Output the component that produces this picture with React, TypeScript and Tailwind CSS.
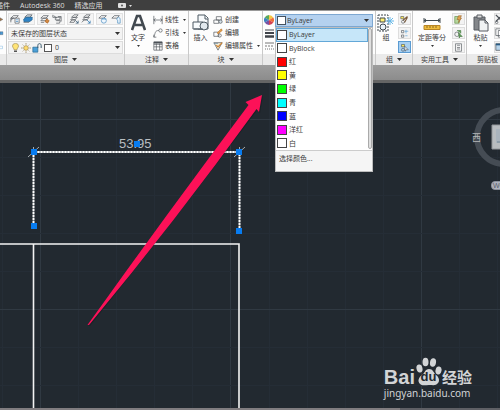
import type { ReactNode } from "react";

const swatches = [
  { name: "ByLayer", color: "bg-white" },
  { name: "ByBlock", color: "bg-white" },
  { name: "红", color: "bg-[#ff0000]" },
  { name: "黄", color: "bg-[#ffff00]" },
  { name: "绿", color: "bg-[#00ff00]" },
  { name: "青", color: "bg-[#00ffff]" },
  { name: "蓝", color: "bg-[#0000ff]" },
  { name: "洋红", color: "bg-[#ff00ff]" },
  { name: "白", color: "bg-white" },
];

function Arrow({ className = "" }: { className?: string }) {
  return (
    <svg className={`h-[3px] w-[5px] shrink-0 ${className}`} viewBox="0 0 5 3" aria-hidden="true">
      <path d="M0 0h5L2.5 3z" fill="#333" />
    </svg>
  );
}

function SmallArrow({ className = "" }: { className?: string }) {
  return (
    <svg className={`h-[2px] w-[3px] shrink-0 ${className}`} viewBox="0 0 3 2" aria-hidden="true">
      <path d="M0 0h3L1.5 2z" fill="#333" />
    </svg>
  );
}

function Glyph({ children, size = "h-3 w-3" }: { children: ReactNode; size?: string }) {
  return (
    <svg className={`shrink-0 ${size}`} viewBox="0 0 12 12" fill="none" stroke="#4c5258" strokeWidth="0.8" aria-hidden="true">
      {children}
    </svg>
  );
}

function Panel({ title, width, children }: { title: string; width: string; children: ReactNode }) {
  return (
    <section className={`flex shrink-0 flex-col border-r border-[#c9c9c9] ${width}`}>
      <div className="flex h-[43px] bg-[#fdfdfd]">{children}</div>
      <button className="mx-px flex h-[11px] items-center justify-center gap-1 whitespace-nowrap bg-[#eaeaea] leading-none">
        {title}
        {title && title !== "剪贴板" && <Arrow />}
      </button>
    </section>
  );
}

const layerIcons: ReactNode[] = [
  <><path d="M1 5l3-3h6l-3 3zM1 7.500l3-2.500M1 10V5h4" /><path d="M6 5h5v6H6z" fill="#fff" /><path d="M7 7h3M7 9h3" stroke="#377eb8" /></>,
  <><path d="M1 10l3-3h6l-3 3zM1 7l3-3h7L8 7zM2 4l3-3h6L8 4z" fill="#cdd8e2" /><path d="M1 9V6l3-2h7v3L8 9z" fill="#2e83c6" stroke="#26699c" /></>,
  <><path d="M1 5l3-3h6l-3 3zM1 8l3-3h5L7 8z" /><path d="M6 9l2-3 3 2-2 3z" fill="#d48b43" stroke="#a85e20" /><path d="M1 10h4" /></>,
  <><path d="M1 1v3h3M2 2l4 3M4 4h6l-1 3H4zM5 8h5l-1 3H5" /><path d="M7 3h4v6" /></>,
  <><path d="M3 4l3-3h5L8 4zM2 7l3-3h5L7 7zM1 10l3-3h4l-2 3z" /><path d="M8 8l3 3m0-3v3H8" stroke="#234a68" /></>,
  <><path d="M3 4l3-3h5L8 4zM2 7l3-3h5L7 7zM1 10l3-3h4" /><path d="M7 7l4 4m0-3v3H8" stroke="#1c6aa7" /></>,
  <><path d="M1 5l3-3h6L7 5z" /><circle cx="7" cy="8" r="3" fill="#eef7ff" stroke="#4689bd" /><path d="M5 6h5" stroke="#4689bd" /></>,
  <><path d="M1 5l3-3h6L7 5z" /><path d="M7 7c0-4 4-4 4 0v4H8V7" fill="#eef7ff" stroke="#4689bd" /></>,
];

function LayersPanel() {
  return (
    <Panel title="图层" width="w-[118px]">
      <div className="flex w-full flex-col gap-px px-px pt-0.5">
        <div className="grid h-[12px] grid-cols-4 gap-0.5">
          {[0, 2, 4, 6].map((i) => (
            <div key={i} className="flex items-center justify-around border border-[#e2e2e2] bg-[#f5f5f5]">
              <button aria-label="图层工具"><Glyph size="h-[10px] w-[10px]">{layerIcons[i]}</Glyph></button>
              <button aria-label="图层工具"><Glyph size="h-[10px] w-[10px]">{layerIcons[i + 1]}</Glyph></button>
            </div>
          ))}
        </div>
        <label className="mt-px flex h-[13px] items-center border border-[#dcdcdc] bg-[#f3f3f3] px-0.5">
          <select aria-label="图层状态" className="w-full appearance-none bg-transparent p-0 leading-none">
            <option>未保存的图层状态</option>
          </select>
          <Arrow />
        </label>
        <label className="flex h-[13px] items-center gap-px border border-[#dcdcdc] bg-[#f3f3f3] px-0.5">
          <Glyph size="h-[9px] w-[9px]">
            <path d="M4 9C4 7 2 6 2 4a4 3.500 0 018 0c0 2-2 3-2 5z" fill="#ffe477" stroke="#9b8549" />
            <path d="M4 11h4" stroke="#555" strokeWidth="2" />
          </Glyph>
          <Glyph size="h-[10px] w-[10px]">
            <circle cx="6" cy="6" r="2.800" fill="#ffdc70" stroke="#9d8240" />
            <path d="M6 0v2M6 10v2M0 6h2M10 6h2M2 2l1 1M9 9l1 1M10 2L9 3M3 9l-1 1" stroke="#8b7440" />
          </Glyph>
          <Glyph size="h-[10px] w-[10px]">
            <path d="M1 5h6v6H1z" fill="#4ca0d8" stroke="#246590" />
            <path d="M7 6V3c0-3 4-3 4 0v3" stroke="#3b5c70" strokeWidth="1.200" />
          </Glyph>
          <span className="ml-px h-2 w-2 shrink-0 border border-[#555] bg-white" />
          <select aria-label="当前图层" className="w-full appearance-none bg-transparent p-0 pl-0.5 leading-none">
            <option>0</option>
          </select>
          <Arrow />
        </label>
      </div>
    </Panel>
  );
}

function Command({ label, arrow, children }: { label: string; arrow?: boolean; children: ReactNode }) {
  return (
    <button className="flex h-[13px] items-center gap-0.5 whitespace-nowrap leading-none">
      <Glyph size="h-[10px] w-[10px]">{children}</Glyph>
      {label}
      {arrow && <SmallArrow className="ml-0.5" />}
    </button>
  );
}

function ColorDropdown() {
  return (
    <div className="relative mt-[3px] h-[13px] w-[98px]">
      <button
        aria-haspopup="listbox"
        aria-expanded="true"
        className="flex h-[13px] w-full items-center gap-px border border-[#7da7d1] bg-[#b4d1ef] px-px leading-none"
      >
        <span className="h-[9px] w-[9px] border border-[#465360] bg-white" />
        <span className="flex-1 text-left">ByLayer</span>
        <Arrow className="mr-0.5" />
      </button>
      <div className="absolute left-0 top-[13px] z-10 w-full border border-[#bdbdbd] bg-white">
        <div className="flex">
          <ul role="listbox" aria-label="对象颜色" className="grid h-[122px] flex-1 grid-rows-9">
            {swatches.map((s, i) => (
              <li
                key={s.name}
                role="option"
                aria-selected={i === 0}
                className={
                  i === 0
                    ? "flex items-center gap-0.5 border border-[#63a8d8] bg-[#c6e6f9] leading-none"
                    : "flex items-center gap-0.5 px-px leading-none"
                }
              >
                <span className={`h-[10px] w-[10px] border border-[#444] ${s.color}`} />
                {s.name}
              </li>
            ))}
          </ul>
          <div className="mb-px w-[4px] rounded border border-[#aaa] bg-[#e0e0e0]" />
        </div>
        <button className="flex h-[21px] w-full items-start border-t border-[#ccc] bg-[#f5f5f5] px-[3px] pt-1 leading-none">
          选择颜色...
        </button>
      </div>
    </div>
  );
}

function Ribbon() {
  return (
    <div className="flex border-t border-[#999] bg-[#eaeaea]">
      <Panel title="" width="w-[7px]">
        <div className="flex flex-col gap-0.5 pt-0.5">
          <Glyph size="h-3 w-[5px]"><path d="M0 3l7 4-7 4z" fill="#aa7b4c" /></Glyph>
          <Glyph size="h-3 w-[5px]"><path d="M0 3h7v7H0z" fill="#4a9ad7" /></Glyph>
          <Glyph size="h-3 w-[5px]"><path d="M0 4h6v6H0" stroke="#4a9ad7" /></Glyph>
        </div>
      </Panel>

      <LayersPanel />

      <Panel title="注释" width="w-[64px]">
        <button className="flex w-[26px] shrink-0 flex-col items-center pt-[3px] leading-none">
          <svg className="h-[18px] w-[15px]" viewBox="0 0 15 18" aria-hidden="true">
            <path d="M1 16L6 2h3l5 14M4 11h7" fill="none" stroke="#424950" strokeWidth="2.600" />
          </svg>
          <span className="mt-0.5">文字</span>
          <SmallArrow className="mt-1" />
        </button>
        <div className="flex flex-col pl-0.5 pt-0.5">
          <Command label="线性" arrow>
            <path d="M1 1v10M11 1v10M1 6h10M3 4L1 6l2 2M9 4l2 2-2 2" />
          </Command>
          <Command label="引线" arrow>
            <path d="M1 11c2-5 1-8 6-8M1 8v3h3" /><circle cx="9" cy="3" r="2" />
          </Command>
          <Command label="表格">
            <path d="M1 1h10v10H1zM1 4h10M1 7h10M4 3v8M8 3v8" fill="#fff" /><path d="M1 2h10" strokeWidth="2" />
          </Command>
        </div>
      </Panel>

      <Panel title="块" width="w-[74px]">
        <button className="flex w-[23px] shrink-0 flex-col items-center pt-[3px] leading-none">
          <svg className="h-[18px] w-[18px]" viewBox="0 0 18 18" fill="#f7fafc" stroke="#4c5962" aria-hidden="true">
            <path d="M6 1h7l3 3v11H6z" /><path d="M13 1v4h3M1 8h10v7H1z" /><circle cx="12" cy="12" r="4" fill="#e1e8ed" /><path d="M2 15h9" />
          </svg>
          <span className="mt-0.5">插入</span>
        </button>
        <div className="flex flex-col pl-px pt-0.5">
          <Command label="创建">
            <path d="M4 2h6v4H4zM1 6h6v4H1z" /><circle cx="9" cy="8" r="2" fill="#d7e2e9" />
          </Command>
          <Command label="编辑">
            <path d="M1 5h6v5H1z" /><circle cx="8" cy="9" r="2" /><path d="M5 6l5-5 1 2-5 4z" fill="#eba64e" stroke="#b46d24" />
          </Command>
          <Command label="编辑属性" arrow>
            <path d="M1 2l5 9 5-9z" fill="#f5ecd6" /><path d="M4 5l2 2 5-5" stroke="#d08430" strokeWidth="1.500" /><path d="M1 3h5" stroke="#6b8fa7" />
          </Command>
        </div>
      </Panel>

      <Panel title="" width="w-[113px]">
        <div className="flex w-3 shrink-0 flex-col items-center gap-1 pt-1">
          <svg className="h-[10px] w-[10px]" viewBox="0 0 10 10" aria-hidden="true">
            <path d="M5 5V0a5 5 0 014.300 2.500z" fill="#f6c844" /><path d="M5 5l4.300-2.500a5 5 0 010 5z" fill="#ef6d3c" />
            <path d="M5 5l4.300 2.500A5 5 0 015 10z" fill="#d44152" /><path d="M5 5v5a5 5 0 01-4.300-2.500z" fill="#7752a2" />
            <path d="M5 5L.7 7.500a5 5 0 010-5z" fill="#3b81c0" /><path d="M5 5L.7 2.500A5 5 0 015 0z" fill="#58a75b" />
          </svg>
          <svg className="h-[9px] w-[9px]" viewBox="0 0 9 9" stroke="#40444a" aria-hidden="true">
            <path d="M0 1h9" /><path d="M0 4h9" strokeWidth="2" /><path d="M0 7.500h9" strokeWidth="2.500" />
          </svg>
          <svg className="h-[9px] w-[9px]" viewBox="0 0 9 9" stroke="#777" aria-hidden="true">
            <path d="M0 1h9" /><path d="M0 4h9" strokeDasharray="2 1" /><path d="M0 7h9" strokeDasharray="1 1" />
          </svg>
        </div>
        <ColorDropdown />
      </Panel>

      <Panel title="组" width="w-[37px]">
        <button className="flex w-[20px] shrink-0 flex-col items-center pt-[3px] leading-none">
          <svg className="h-[18px] w-[18px]" viewBox="0 0 18 18" fill="none" stroke="#3f484e" aria-hidden="true">
            <path d="M1 1h10v16H1z" strokeDasharray="2 1" /><path d="M3 4h5v4H3z" fill="#fff070" />
            <circle cx="6" cy="13" r="3" fill="#e9f3fa" /><path d="M9 7h8M13 3v8M10 4l6 6M16 4l-6 6" stroke="#69b9e8" />
          </svg>
          <span className="mt-0.5">组</span>
        </button>
        <div className="flex flex-1 flex-col items-center gap-0.5 pt-0.5">
          <button aria-label="解除编组" className="flex h-3 w-[13px] items-center justify-center border border-[#ddd] bg-[#f3f3f3]">
            <Glyph size="h-[9px] w-[9px]"><path d="M1 2h4v3H1z" fill="#ffe85a" /><circle cx="4" cy="9" r="2" /><path d="M4 7l6-5M6 10l4-7" strokeWidth="1.500" stroke="#79593a" /></Glyph>
          </button>
          <button aria-label="组编辑" className="flex h-3 w-[13px] items-center justify-center border border-[#ddd] bg-[#f3f3f3]">
            <Glyph size="h-[9px] w-[9px]"><path d="M2 2h3v3H2zM2 8h3v3H2z" /><path d="M6 3h5M8 1v5M7 9h3" stroke="#4a9ad7" /></Glyph>
          </button>
          <button aria-label="启用组选择" className="flex h-3 w-[13px] items-center justify-center border border-[#5a9bd2] bg-[#a8d0f1]">
            <Glyph size="h-[9px] w-[9px]"><path d="M2 2h4v3H2z" fill="#ffe85a" /><circle cx="4" cy="9" r="2" /><path d="M6 4l5 5H8l-1 2z" fill="#fff" /></Glyph>
          </button>
        </div>
      </Panel>

      <Panel title="实用工具" width="w-[54px]">
        <button className="flex w-[38px] shrink-0 flex-col items-center whitespace-nowrap pt-[3px] leading-none">
          <svg className="h-[18px] w-[18px]" viewBox="0 0 18 18" fill="none" stroke="#404a51" aria-hidden="true">
            <path d="M1 4v5M17 4v5M1 6.500h16M3 5L1 6.500 3 8M15 5l2 1.500L15 8" />
            <path d="M1 11.500h16v4H1z" fill="#efbd3e" stroke="#b78424" /><path d="M4 12v2M7 12v2M10 12v2M13 12v2" stroke="#8b6b27" />
          </svg>
          <span className="mt-0.5">定距等分</span>
          <SmallArrow className="mt-1" />
        </button>
        <div className="flex flex-1 flex-col items-center gap-0.5 pt-0.5">
          <button aria-label="快速选择" className="flex h-3 w-[13px] items-center justify-center border border-[#ddd] bg-[#f3f3f3]">
            <Glyph size="h-[9px] w-[9px]"><path d="M1 2h6v9H1z" fill="#b6d69c" stroke="#59863e" /><path d="M6 1l-2 5h3l-1 4 4-6H8l2-3z" fill="#e5a34c" stroke="#986431" /></Glyph>
          </button>
          <button aria-label="全部选择" className="flex h-3 w-[13px] items-center justify-center border border-[#ddd] bg-[#f3f3f3]">
            <Glyph size="h-[9px] w-[9px]"><circle cx="4" cy="7" r="3" /><path d="M4 2h5v4M6 5l5 5H8l-1 2z" fill="#61a15a" stroke="#43763f" /></Glyph>
          </button>
          <button aria-label="计算器" className="flex h-3 w-[13px] items-center justify-center border border-[#ddd] bg-[#f3f3f3]">
            <Glyph size="h-[9px] w-[9px]"><path d="M2 1h8v10H2z" /><path d="M4 3h4M4 6h4M4 8h4" /></Glyph>
          </button>
        </div>
      </Panel>

      <Panel title="剪贴板" width="min-w-[42px] flex-1">
        <button className="flex w-[27px] shrink-0 flex-col items-center pt-[3px] leading-none">
          <svg className="h-[18px] w-[16px]" viewBox="0 0 16 18" stroke="#565b60" aria-hidden="true">
            <path d="M1 3h11v13H1z" fill="#83868a" /><path d="M4 1h5v3H4z" fill="#ddd" /><path d="M6 6h6l3 3v8H6z" fill="#f0f2f3" /><path d="M12 6v3h3" fill="none" />
          </svg>
          <span className="mt-0.5">粘贴</span>
          <SmallArrow className="mt-1" />
        </button>
        <div className="flex shrink-0 flex-col gap-0.5 pt-0.5">
          <button aria-label="剪切" className="flex h-3 w-[13px] items-center border border-[#ddd] bg-[#f3f3f3]">
            <Glyph size="h-[10px] w-[10px]"><path d="M1 1l9 9M1 9l8-8" strokeWidth="1.500" /><circle cx="2" cy="10" r="1.500" /></Glyph>
          </button>
          <button aria-label="复制" className="flex h-3 w-[13px] items-center border border-[#ddd] bg-[#f3f3f3]">
            <Glyph size="h-[10px] w-[10px]"><path d="M1 1h6v8H1zM4 3h7v8H4z" fill="#fff" /></Glyph>
          </button>
          <button aria-label="特性匹配" className="flex h-3 w-[13px] items-center border border-[#ddd] bg-[#f3f3f3]">
            <Glyph size="h-[10px] w-[10px]"><path d="M1 2h9v8H1z" fill="#b8d4ea" /><path d="M1 3h9" stroke="#2a5b84" strokeWidth="2" /></Glyph>
          </button>
        </div>
      </Panel>
    </div>
  );
}

const verticals = [2, 40, 78, 116, 154, 192, 230, 269, 307, 345, 383, 421, 459, 497];
const horizontals = [36, 74, 112, 150, 188, 226, 264, 302];

function Drawing() {
  return (
    <svg className="absolute left-0 top-0 h-[327px] w-[500px]" viewBox="0 0 500 327" aria-label="CAD 图形">
      <g shapeRendering="crispEdges">
        {verticals.map((x) => (
          <path key={x} d={`M${x + 0.5} 0V327`} stroke={x === 40 || x === 230 || x === 421 ? "#303942" : "#252d36"} />
        ))}
        {horizontals.map((y) => (
          <path key={y} d={`M0 ${y + 0.5}H500`} stroke={y === 36 || y === 226 ? "#303942" : "#252d36"} />
        ))}
      </g>
      <path d="M0 161H239V325M33.500 161V325" fill="none" stroke="#f3f3f3" strokeWidth="1.600" />
      <g fill="none">
        <path d="M33.500 143V69H239.500V148" stroke="#8a8f93" strokeWidth="1.800" />
        <path d="M33.500 143V69H239.500V148" stroke="#fff" strokeWidth="1.800" strokeDasharray="2 1" />
        <path d="M28 74l11-10M234 74l11-10M33.500 64v6M239.500 64v6" stroke="#a5aaad" />
      </g>
    </svg>
  );
}

function Grips() {
  return (
    <svg className="absolute left-0 top-0 h-[327px] w-[500px]" viewBox="0 0 500 327" aria-hidden="true">
      <g fill="#087cf0">
        <path d="M31 66h6v6h-6zM31 140h6v6h-6zM236 66h6v6h-6zM236 145h6v6h-6zM134 58h6v6h-6z" />
      </g>
      <path d="M87.500 242Q168 132 248.500 22L245.500 19L262 12L259 29L256.500 26Q172 138 89 242z" fill="#10161c" opacity="0.400" transform="translate(1 1)" />
      <path d="M87.500 242Q166 132 248.500 22L245.500 19L262 12L259 29L256.500 26Q174 140 89 242z" fill="#fc1158" />
      <g fill="none">
        <circle cx="504" cy="54" r="27" stroke="#454c54" strokeWidth="6" />
        <path d="M492 42h10v24h-10z" fill="#b8bcbf" stroke="#929699" />
        <path d="M496 46h5v14h-5z" fill="#aab4bd" />
        <path d="M497 59h4" stroke="#708594" />
      </g>
    </svg>
  );
}

function Watermark() {
  return (
    <div className="absolute bottom-2 right-[28px] text-[#d2d4d6]">
      <div className="flex h-[30px] items-end">
        <span className="font-['Liberation_Sans',sans-serif] text-[20px] font-bold leading-[18px]">Bai</span>
        <div className="relative h-[29px] w-[27px]">
          <svg className="h-[29px] w-[27px]" viewBox="0 0 27 29" fill="currentColor" aria-hidden="true">
            <ellipse cx="4.500" cy="11.500" rx="3" ry="4" transform="rotate(-12 4.500 11.500)" />
            <ellipse cx="10.500" cy="5" rx="3" ry="4.300" />
            <ellipse cx="18" cy="5.500" rx="3" ry="4.300" transform="rotate(10 18 5.500)" />
            <ellipse cx="23.500" cy="13.500" rx="3" ry="4" transform="rotate(12 23.500 13.500)" />
            <path d="M14 12c4 0 4 3 7 6 3 2 4 6 2 8-2 3-5 2-9 2s-7 1-9-1c-3-3-1-7 2-9s3-6 7-6z" />
          </svg>
          <span className="absolute inset-x-0 bottom-[3px] text-center font-['Liberation_Sans',sans-serif] text-[13px] font-bold leading-[13px] text-[#222930]">du</span>
        </div>
        <span className="text-[15px] font-bold leading-[18px]">经验</span>
      </div>
      <p className="whitespace-nowrap font-['Noto_Sans',sans-serif] text-[10px] leading-[14px]">jingyan.baidu.com</p>
    </div>
  );
}

export default function App() {
  return (
    <div className="flex min-h-screen flex-col overflow-hidden bg-[#222930] font-['Open_Sans','Noto_Sans_CJK_SC',sans-serif] text-[7px] text-[#3a3a3a]">
      <nav className="flex h-[10px] items-center whitespace-nowrap bg-[#3f3f3f] leading-none text-[#dedede]">
        <button className="flex w-[10px] justify-end">插件</button>
        <button className="ml-[10px]">Autodesk 360</button>
        <button className="ml-[10px]">精选应用</button>
        <button aria-label="显示选项" className="ml-[16px]">
          <svg className="h-[5px] w-[14px]" viewBox="0 0 14 5" aria-hidden="true">
            <rect width="8" height="5" rx="1" fill="#e0e0e0" />
            <circle cx="4" cy="2.500" r="1" fill="#555" />
            <path d="M11 2h3l-1.500 2z" fill="#e0e0e0" />
          </svg>
        </button>
      </nav>
      <Ribbon />
      <div className="h-[18px] border-b-[3px] border-[#656565] bg-linear-to-b from-[#9d9d9d] to-[#8c8c8c]" />
      <main className="relative flex-1 overflow-hidden">
        <Drawing />
        <span className="absolute left-[119px] top-[54px] font-['Liberation_Sans',sans-serif] text-[13px] leading-[14px] text-[#b9bec2]">53.95</span>
        <Grips />
        <span className="absolute left-[472px] top-[50px] text-[9px] leading-[10px] text-[#b5b7b9]">西</span>
        <span className="absolute left-[491px] top-[98px] rounded-sm border border-[#8b909b] bg-[#afb3be] px-px font-['Liberation_Sans',sans-serif] text-[7px] leading-[7px] text-[#59606a]">WCS</span>
        <Watermark />
      </main>
      <footer className="flex h-[2px] bg-[#5f6065]">
        <div className="w-4/5 bg-[#817d80]" />
      </footer>
    </div>
  );
}
